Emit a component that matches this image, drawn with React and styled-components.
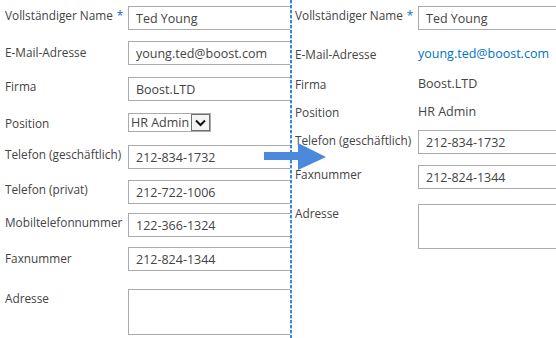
import React from "react";
import styled, { createGlobalStyle } from "styled-components";

const GlobalStyle = createGlobalStyle`
  body {
    margin: 0;
    background: #fff;
    font-family: "Open Sans", "Liberation Sans", sans-serif;
  }
`;

const Page = styled.div`
  position: relative;
  display: flex;
  width: 556px;
  height: 338px;
  overflow: hidden;
  background: #fff;
  color: #444;
  font-size: 11.8px;
`;

const Panel = styled.div`
  display: flex;
  flex-direction: column;
  flex: ${(p) => (p.$grow ? 1 : "none")};
  width: ${(p) => (p.$grow ? "auto" : "290px")};
  padding: 6px 0 0 ${(p) => p.$pl}px;
  overflow: hidden;
  box-sizing: border-box;
`;

const Divider = styled.div`
  width: 2px;
  flex-shrink: 0;
  background: repeating-linear-gradient(
    to bottom,
    #3a85e0 0 3px,
    #b5d0f2 3px 4px,
    #fff 4px 5px
  );
`;

const Row = styled.div`
  display: flex;
  align-items: flex-start;
  flex-shrink: 0;
  margin-bottom: ${(p) => p.$gap}px;
`;

const Label = styled.div`
  width: 123px;
  flex-shrink: 0;
  line-height: 18px;
  padding-top: ${(p) => p.$pt ?? 2}px;
  white-space: nowrap;
  color: #444;
`;

const Required = styled.span`
  color: #0072c6;
  margin-left: 4px;
`;

const Input = styled.div`
  box-sizing: border-box;
  width: 200px;
  height: ${(p) => p.$h || 24}px;
  flex-shrink: 0;
  border: 1px solid #ababab;
  background: #fff;
  padding: 0 7px;
  display: flex;
  align-items: ${(p) => (p.$h ? "flex-start" : "center")};
  color: #444;
  font-size: 12.5px;
  white-space: nowrap;
`;

const Value = styled.div`
  line-height: 18px;
  padding-top: 2px;
  white-space: nowrap;
  font-size: 12.5px;
  color: ${(p) => (p.$link ? "#0072c6" : "#444")};
`;

const Select = styled.div`
  box-sizing: border-box;
  display: flex;
  align-items: center;
  height: 19px;
  margin-top: 2px;
  border: 1px solid #ababab;
  padding-left: 2px;
  font-size: 12.5px;
  color: #444;
`;

const SelectButton = styled.div`
  box-sizing: border-box;
  width: 19px;
  height: 17px;
  margin-left: 2px;
  border: 1px solid #6f6f6f;
  background: #f4f4f4;
  display: flex;
  align-items: center;
  justify-content: center;
`;

const Arrow = styled.svg`
  position: absolute;
  left: 263px;
  top: 142px;
`;

const Chevron = () => (
  <svg width="11" height="8" viewBox="0 0 11 8">
    <path d="M1 1.5 L5.5 6 L10 1.5" fill="none" stroke="#111" strokeWidth="2" />
  </svg>
);

const App = () => {
  return (
    <Page>
      <GlobalStyle />
      <Panel $pl={5}>
        <Row $gap={11}>
          <Label $pt={0}>
            Vollständiger Name<Required>*</Required>
          </Label>
          <Input>Ted Young</Input>
        </Row>
        <Row $gap={12}>
          <Label>E-Mail-Adresse</Label>
          <Input>young.ted@boost.com</Input>
        </Row>
        <Row $gap={10}>
          <Label $pt={-4}>Firma</Label>
          <Input>Boost.LTD</Input>
        </Row>
        <Row $gap={13}>
          <Label $pt={3}>Position</Label>
          <Select>
            HR Admin
            <SelectButton>
              <Chevron />
            </SelectButton>
          </Select>
        </Row>
        <Row $gap={11}>
          <Label $pt={-2}>Telefon (geschäftlich)</Label>
          <Input>212-834-1732</Input>
        </Row>
        <Row $gap={9}>
          <Label $pt={0}>Telefon (privat)</Label>
          <Input>212-722-1006</Input>
        </Row>
        <Row $gap={10}>
          <Label $pt={0}>Mobiltelefonnummer</Label>
          <Input>122-366-1324</Input>
        </Row>
        <Row $gap={18}>
          <Label $pt={2}>Faxnummer</Label>
          <Input>212-824-1344</Input>
        </Row>
        <Row $gap={0}>
          <Label $pt={-2}>Adresse</Label>
          <Input $h={46} />
        </Row>
      </Panel>
      <Divider />
      <Panel $grow $pl={3}>
        <Row $gap={13}>
          <Label $pt={0}>
            Vollständiger Name<Required>*</Required>
          </Label>
          <Input>Ted Young</Input>
        </Row>
        <Row $gap={10}>
          <Label>E-Mail-Adresse</Label>
          <Value $link>young.ted@boost.com</Value>
        </Row>
        <Row $gap={8}>
          <Label>Firma</Label>
          <Value>Boost.LTD</Value>
        </Row>
        <Row $gap={9}>
          <Label>Position</Label>
          <Value>HR Admin</Value>
        </Row>
        <Row $gap={11}>
          <Label $pt={1}>Telefon (geschäftlich)</Label>
          <Input>212-834-1732</Input>
        </Row>
        <Row $gap={15}>
          <Label $pt={0}>Faxnummer</Label>
          <Input>212-824-1344</Input>
        </Row>
        <Row $gap={0}>
          <Label $pt={-3}>Adresse</Label>
          <Input $h={45} />
        </Row>
      </Panel>
      <Arrow width="64" height="30" viewBox="0 0 64 30">
        <path d="M1 10 H35 V1 L63 15 L35 28 V18 H1 Z" fill="#4a89dc" />
      </Arrow>
    </Page>
  );
};

export default App;
